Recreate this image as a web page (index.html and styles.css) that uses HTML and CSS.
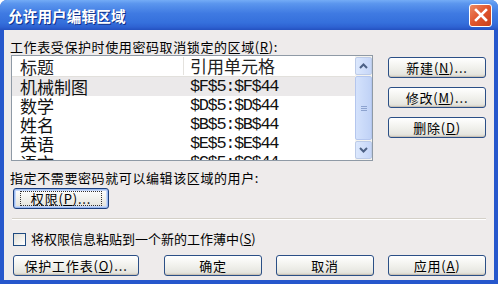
FILE: index.html
```html
<!DOCTYPE html>
<html lang="zh-CN">
<head>
    <meta charset="UTF-8">
    <title>允许用户编辑区域</title>
    <link rel="stylesheet" href="styles.css">
</head>
<body>

    <!-- Dialog window -->
    <div class="window">
        <div class="titlebar">
            <span class="title">允许用户编辑区域</span>
            <div class="close">
                <svg width="14" height="14" viewBox="0 0 14 14">
                    <path d="M2 2 L12 12 M12 2 L2 12" stroke="#fff" stroke-width="2.6" stroke-linecap="square"/>
                </svg>
            </div>
        </div>

        <div class="client">
            <div class="label top-label">工作表受保护时使用密码取消锁定的区域(<u>R</u>):</div>

            <div class="top-row">
                <!-- Range list -->
                <div class="listbox">
                    <div class="list">
                        <div class="row head"><span class="c1">标题</span><span class="c2">引用单元格</span></div>
                        <div class="row sel"><span class="c1">机械制图</span><span class="c2 ref">$F$5:$F$44</span></div>
                        <div class="row"><span class="c1">数学</span><span class="c2 ref">$D$5:$D$44</span></div>
                        <div class="row"><span class="c1">姓名</span><span class="c2 ref">$B$5:$B$44</span></div>
                        <div class="row"><span class="c1">英语</span><span class="c2 ref">$E$5:$E$44</span></div>
                        <div class="row"><span class="c1">语文</span><span class="c2 ref">$C$5:$C$44</span></div>
                    </div>
                    <div class="scrollbar">
                        <div class="sb-btn">
                            <svg width="9" height="6" viewBox="0 0 9 6"><path d="M1 5 L4.5 1.5 L8 5" fill="none" stroke="#4d6185" stroke-width="2"/></svg>
                        </div>
                        <div class="sb-thumb">
                            <span></span><span></span><span></span>
                        </div>
                        <div class="sb-btn">
                            <svg width="9" height="6" viewBox="0 0 9 6"><path d="M1 1 L4.5 4.5 L8 1" fill="none" stroke="#4d6185" stroke-width="2"/></svg>
                        </div>
                    </div>
                </div>

                <div class="side-buttons">
                    <button class="btn">新建(<u>N</u>)...</button>
                    <button class="btn">修改(<u>M</u>)...</button>
                    <button class="btn">删除(<u>D</u>)</button>
                </div>
            </div>

            <div class="label users-label">指定不需要密码就可以编辑该区域的用户:</div>
            <button class="btn perm-btn"><span class="focus">权限(<u>P</u>)...</span></button>

            <div class="separator"></div>

            <label class="check-row">
                <span class="checkbox"></span>
                <span>将权限信息粘贴到一个新的工作薄中(<u>S</u>)</span>
            </label>

            <div class="bottom-row">
                <button class="btn protect-btn">保护工作表(<u>O</u>)...</button>
                <button class="btn ok-btn">确定</button>
                <button class="btn">取消</button>
                <button class="btn">应用(<u>A</u>)</button>
            </div>
        </div>
    </div>

</body>
</html>
```

FILE: styles.css
```css
body { margin: 0; font-family: "Noto Sans CJK SC", sans-serif; font-size: 13px; background: #fff; }

.window {
    width: 498px;
    height: 284px;
    background: #2657cc;
    border-radius: 7px 7px 0 0;
    display: flex;
    flex-direction: column;
    overflow: hidden;
}

.titlebar {
    height: 30px;
    flex: none;
    display: flex;
    align-items: center;
    justify-content: space-between;
    padding: 0 6px 0 8px;
    background: linear-gradient(#74acf6 0%, #5b96ee 12%, #3f7ae2 45%, #3570dc 75%, #2e62d2 90%, #2451c0 100%);
}

.title {
    color: #fff;
    font-weight: bold;
    font-size: 14.5px;
    letter-spacing: 0.2px;
    text-shadow: 1px 1px 0 #10308a;
}

.close {
    width: 21px;
    height: 21px;
    border: 1px solid #fff;
    border-radius: 3px;
    background: linear-gradient(135deg, #ec8a64 0%, #e0552c 50%, #c8401c 100%);
    display: flex;
    align-items: center;
    justify-content: center;
}

.client {
    flex: 1;
    margin: 0 4px 4px 4px;
    background: #eeebeb;
    padding: 0 8px 0 6px;
    display: flex;
    flex-direction: column;
}

.label { line-height: 14px; color: #000; letter-spacing: 0.6px; }
.top-label { margin-top: 10px; }

.top-row {
    display: flex;
    margin-top: 1px;
}

/* List with columns */
.listbox {
    width: 360px;
    height: 104px;
    margin-left: 1px;
    border: 1px solid #8f9aa6;
    background: #fff;
    display: flex;
    overflow: hidden;
}

.list { flex: 1; overflow: hidden; }

.row {
    height: 19px;
    line-height: 19px;
    display: flex;
    align-items: center;
    font-size: 17px;
    color: #111;
    white-space: nowrap;
}

.row.head {
    height: 20px;
    border-bottom: 1px solid #e2e0dc;
    color: #222;
}

.row.sel { background: #ebe9ea; }

.c1 { width: 171px; padding-left: 8px; flex: none; box-sizing: border-box; }
.c2 { padding-left: 7px; }
.head .c2 { border-left: 1px solid #e4e2de; padding-left: 6px; line-height: 18px; }

.ref {
    font-family: "Liberation Mono", monospace;
    font-size: 17px;
    letter-spacing: -1.4px;
}

.scrollbar {
    width: 17px;
    flex: none;
    background: #f4f3ee;
    display: flex;
    flex-direction: column;
    padding: 1px 0;
    gap: 1px;
}

.sb-btn {
    height: 16px;
    border: 1px solid #bccbe8;
    border-radius: 2px;
    background: linear-gradient(90deg, #dce8fd, #c6d6f8);
    display: flex;
    align-items: center;
    justify-content: center;
}

.sb-thumb {
    flex: 1;
    border: 1px solid #b4c6ee;
    border-radius: 2px;
    background: linear-gradient(90deg, #d4e2fc, #c0d2f6);
    display: flex;
    flex-direction: column;
    align-items: center;
    justify-content: center;
    gap: 1px;
}

.sb-thumb span { width: 6px; height: 1px; background: #8da3cf; }

.side-buttons {
    display: flex;
    flex-direction: column;
    gap: 9px;
    margin-left: 15px;
    margin-top: 2px;
}

/* XP-like push button */
.btn {
    width: 98px;
    height: 21px;
    padding: 0;
    font-family: "Noto Sans CJK SC", sans-serif;
    font-size: 13px;
    color: #000;
    border: 1px solid #2b4f86;
    border-radius: 3px;
    background: linear-gradient(#ffffff 0%, #f4f4f0 40%, #e6e6e0 85%, #d6d0c5 100%);
    box-shadow: inset 0 -1px 0 #c8c2b8;
    display: flex;
    align-items: center;
    justify-content: center;
    letter-spacing: 0.8px;
}

.users-label { margin-top: 10px; }

.perm-btn {
    width: 96px;
    height: 21px;
    margin: 3px 0 0 3px;
    border-color: #1c3f7e;
    box-shadow: inset 0 0 0 1px #9bbbf0, inset 0 0 0 2px #c6d8fa;
}

.perm-btn .focus {
    border: 1px dotted #333;
    padding: 0 10px;
    line-height: 13px;
}

.separator {
    margin: 9px 0 0 2px;
    border-top: 1px solid #d4d0c8;
    border-bottom: 1px solid #fff;
}

.check-row {
    display: flex;
    align-items: center;
    gap: 5px;
    margin: 12px 0 0 3px;
    line-height: 14px;
    font-size: 13px;
}

.checkbox {
    width: 11px;
    height: 11px;
    border: 1px solid #1f4a80;
    background: linear-gradient(135deg, #e0ded6, #fff);
}

.bottom-row {
    display: flex;
    gap: 14px;
    margin: 9px 0 0 3px;
}

.protect-btn { width: 126px; margin-right: 11px; }
```
